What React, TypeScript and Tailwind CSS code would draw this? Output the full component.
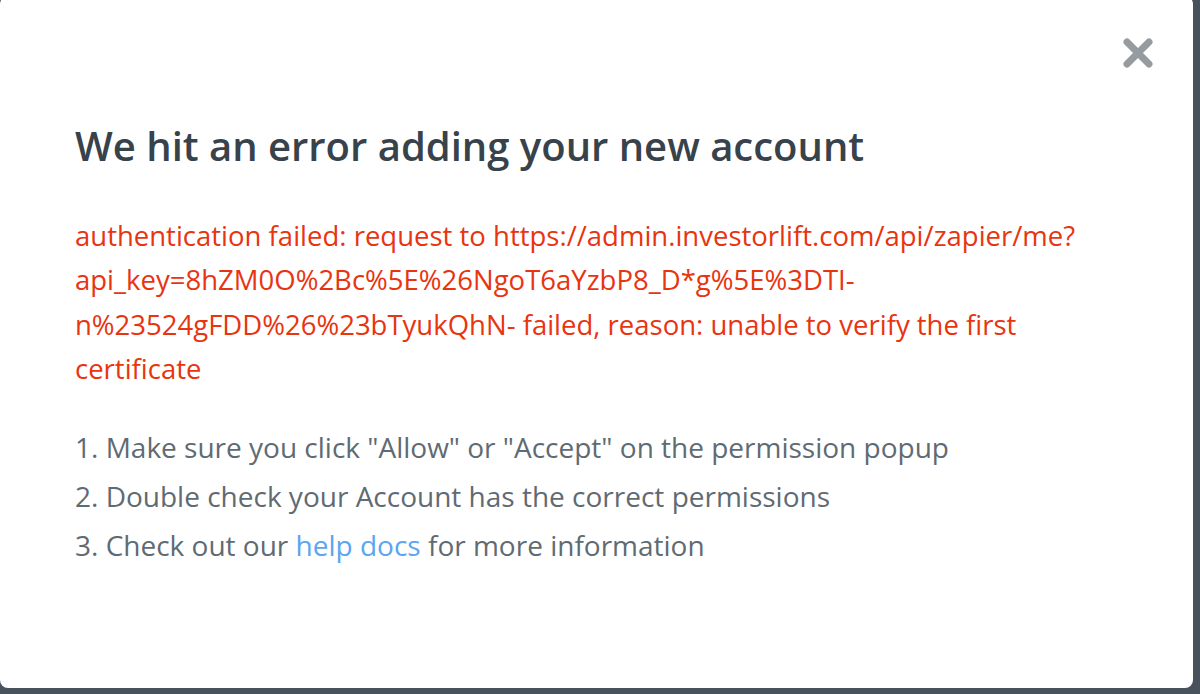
import React from 'react';

const errorText =
  'authentication failed: request to https://admin.investorlift.com/api/zapier/me?api_key=8hZM0O%2Bc%5E%26NgoT6aYzbP8_D*g%5E%3DTI-n%23524gFDD%26%23bTyukQhN- failed, reason: unable to verify the first certificate';

export default function App() {
  return (
    <main
      className="h-[694px] w-full overflow-hidden bg-[#48525c]"
      style={{ fontFamily: '"Open Sans", "Noto Sans", sans-serif' }}
    >
      {/* Modal */}
      <div className="relative -mt-1 h-[692px] w-[1193px] rounded-lg bg-white px-[75px] pt-[126px]">
        {/* Close button */}
        <button className="absolute right-[40px] top-[42px] p-0" aria-label="Close">
          <svg width="30" height="30" viewBox="0 0 30 30" fill="none">
            <path d="M4 4l22 22M26 4L4 26" stroke="#969ba0" strokeWidth="7" strokeLinecap="round" />
          </svg>
        </button>

        <h1 className="text-[40px] font-semibold leading-[48px] text-[#37424a]">
          We hit an error adding your new account
        </h1>

        <p className="mt-[44px] text-[27.5px] leading-[44.3px] text-[#e8340f]">{errorText}</p>

        <ol className="mt-[32px] text-[28px] leading-[49px] text-[#5f6b73]">
          <li>1. Make sure you click "Allow" or "Accept" on the permission popup</li>
          <li>2. Double check your Account has the correct permissions</li>
          <li>
            3. Check out our <a className="text-[#5aa6f0]" href="#">help docs</a> for more information
          </li>
        </ol>
      </div>
    </main>
  );
}
